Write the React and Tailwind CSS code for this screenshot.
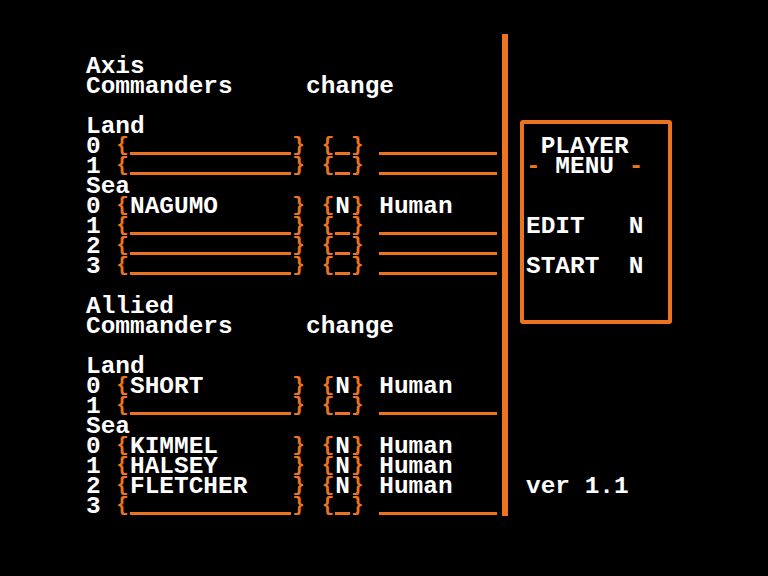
import React from 'react';

// one text cell of the old hi-res screen
const CW = 14.667;

const axis = [
  'Axis',
  'Commanders     change',
  '',
  'Land',
  '0 {___________} {_} ________',
  '1 {___________} {_} ________',
  'Sea',
  '0 {NAGUMO     } {N} Human',
  '1 {___________} {_} ________',
  '2 {___________} {_} ________',
  '3 {___________} {_} ________',
  '',
  'Allied',
  'Commanders     change',
  '',
  'Land',
  '0 {SHORT      } {N} Human',
  '1 {___________} {_} ________',
  'Sea',
  '0 {KIMMEL     } {N} Human',
  '1 {HALSEY     } {N} Human',
  '2 {FLETCHER   } {N} Human',
  '3 {___________} {_} ________',
];

const menu = [' PLAYER', '- MENU -', '', '', 'EDIT   N', '', 'START  N'];

function kindOf(ch) {
  if (ch === '_') return 'u';
  if (ch === '{' || ch === '}') return 'b';
  if (ch === '-') return 'o';
  return 'w';
}

function Line({ text }) {
  const runs = [];
  for (const ch of text) {
    const k = kindOf(ch);
    const last = runs[runs.length - 1];
    if (last && last.k === k && k !== 'b') last.s += ch;
    else runs.push({ k, s: ch });
  }
  return (
    <div className="h-[20px] whitespace-pre flex">
      {runs.map((r, i) => {
        if (r.k === 'u')
          return (
            <span key={i} className="block h-[20px] shrink-0" style={{ width: r.s.length * CW }}>
              <span className="block mt-[15px] h-[3px] bg-[#ec7420]" />
            </span>
          );
        if (r.k === 'b')
          return (
            <span
              key={i}
              className="block h-[20px] shrink-0 text-center text-[#ec7420] text-[21px] leading-[18px]"
              style={{ width: CW }}
            >
              {r.s}
            </span>
          );
        return (
          <span
            key={i}
            className={'block h-[20px] shrink-0 ' + (r.k === 'o' ? 'text-[#ec7420]' : 'text-white')}
            style={{ width: r.s.length * CW }}
          >
            {r.s}
          </span>
        );
      })}
    </div>
  );
}

export default function App() {
  return (
    <div className="w-[768px] h-[576px] bg-black overflow-hidden flex items-start pl-[86px] font-['Liberation_Mono',monospace] font-bold text-[24.44px] leading-[20px]">
      <div className="w-[411px] mt-[57px] shrink-0">
        {axis.map((t, i) => (
          <Line key={i} text={t} />
        ))}
      </div>

      <div className="w-[6px] h-[482px] mt-[34px] ml-[5px] bg-[#ec7420] shrink-0" />

      <div className="ml-[12px] mt-[120px] flex flex-col">
        <div className="w-[152px] h-[204px] border-[4px] border-[#ec7420] rounded-[3px] pt-[13px] pl-[2px]">
          {menu.map((t, i) => (
            <Line key={i} text={t} />
          ))}
        </div>
        <div className="mt-[153px] pl-[6px]">
          <Line text="ver 1.1" />
        </div>
      </div>
    </div>
  );
}
